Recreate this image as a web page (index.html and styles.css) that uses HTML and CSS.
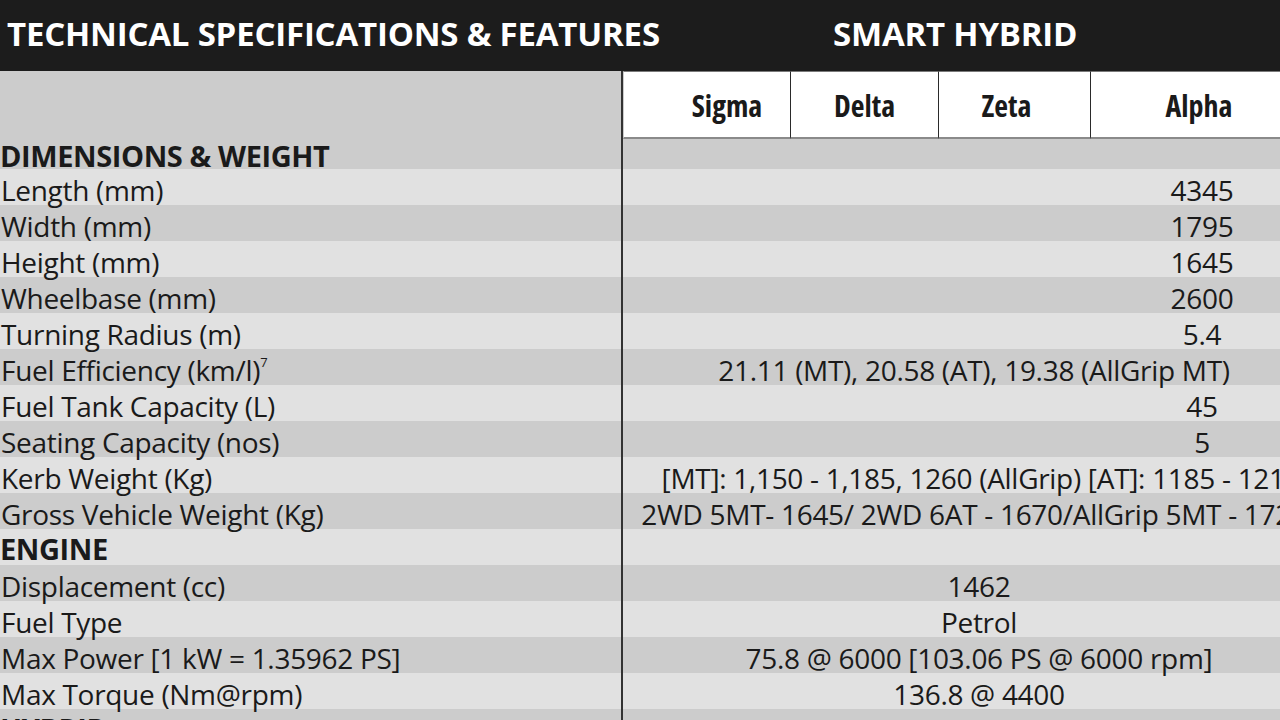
FILE: index.html
```html
<!DOCTYPE html>
<html>
<head>
<meta charset="utf-8">
<title>Technical Specifications &amp; Features</title>
<link rel="stylesheet" href="styles.css">
</head>
<body>
<div class="page">
  <header class="topbar">
    <h1 class="title-main">TECHNICAL SPECIFICATIONS &amp; FEATURES</h1>
    <h2 class="title-side">SMART HYBRID</h2>
  </header>

  <div class="row head-row">
    <div class="label"></div>
    <div class="vals variants">
      <div class="variant v-sigma">Sigma</div>
      <div class="variant v-delta">Delta</div>
      <div class="variant v-zeta">Zeta</div>
      <div class="variant v-alpha">Alpha</div>
    </div>
  </div>

  <div class="row dark section first">
    <div class="label">DIMENSIONS &amp; WEIGHT</div>
    <div class="vals"></div>
  </div>
  <div class="row light">
    <div class="label">Length (mm)</div>
    <div class="vals alpha">4345</div>
  </div>
  <div class="row dark">
    <div class="label">Width (mm)</div>
    <div class="vals alpha">1795</div>
  </div>
  <div class="row light">
    <div class="label">Height (mm)</div>
    <div class="vals alpha">1645</div>
  </div>
  <div class="row dark">
    <div class="label">Wheelbase (mm)</div>
    <div class="vals alpha">2600</div>
  </div>
  <div class="row light">
    <div class="label">Turning Radius (m)</div>
    <div class="vals alpha">5.4</div>
  </div>
  <div class="row dark">
    <div class="label">Fuel Efficiency (km/l)<sup>7</sup></div>
    <div class="vals span">21.11 (MT), 20.58 (AT), 19.38 (AllGrip MT)</div>
  </div>
  <div class="row light">
    <div class="label">Fuel Tank Capacity (L)</div>
    <div class="vals alpha">45</div>
  </div>
  <div class="row dark">
    <div class="label">Seating Capacity (nos)</div>
    <div class="vals alpha">5</div>
  </div>
  <div class="row light">
    <div class="label">Kerb Weight (Kg)</div>
    <div class="vals span kerb">[MT]: 1,150 - 1,185, 1260 (AllGrip) [AT]: 1185 - 1210</div>
  </div>
  <div class="row dark">
    <div class="label">Gross Vehicle Weight (Kg)</div>
    <div class="vals span">2WD 5MT- 1645/ 2WD 6AT - 1670/AllGrip 5MT - 1720</div>
  </div>
  <div class="row light section">
    <div class="label">ENGINE</div>
    <div class="vals"></div>
  </div>
  <div class="row dark">
    <div class="label">Displacement (cc)</div>
    <div class="vals span engine">1462</div>
  </div>
  <div class="row light">
    <div class="label">Fuel Type</div>
    <div class="vals span engine">Petrol</div>
  </div>
  <div class="row dark">
    <div class="label">Max Power [1 kW = 1.35962 PS]</div>
    <div class="vals span engine">75.8 @ 6000 [103.06 PS @ 6000 rpm]</div>
  </div>
  <div class="row light">
    <div class="label">Max Torque (Nm@rpm)</div>
    <div class="vals span engine">136.8 @ 4400</div>
  </div>
  <div class="row dark section">
    <div class="label">HYBRID</div>
    <div class="vals"></div>
  </div>
</div>
</body>
</html>
```
FILE: styles.css
```css
html, body {
  margin: 0;
  padding: 0;
  overflow: hidden;
  background: #cccccc;
}
body {
  font-family: "Open Sans", "DejaVu Sans", sans-serif;
  color: #1a1a1a;
}
.page {
  width: 1327px;
}
.topbar {
  height: 71px;
  background: #1c1c1c;
  display: flex;
  align-items: flex-start;
  box-sizing: border-box;
  padding-top: 17px;
}
.title-main,
.title-side {
  margin: 0;
  color: #ffffff;
  font-weight: 700;
  font-size: 33px;
  letter-spacing: -0.2px;
  white-space: nowrap;
  line-height: 1;
}
.title-main {
  width: 616px;
  padding-left: 7px;
}
.title-side {
  flex: 1;
  padding-left: 210px;
}
.row {
  display: flex;
  height: 36px;
  font-size: 28px;
  letter-spacing: -0.3px;
  line-height: 36px;
  white-space: nowrap;
}
.row.first {
  height: 30px;
  line-height: 30px;
}
.light { background: #e1e1e1; }
.dark { background: #cccccc; }
.label {
  width: 621px;
  flex: 0 0 621px;
  padding-left: 1px;
  box-sizing: border-box;
  padding-top: 3px;
}
.section .label {
  font-weight: 700;
  font-size: 29px;
  letter-spacing: -0.4px;
  padding-left: 0;
  padding-top: 2px;
}
.vals {
  flex: 0 0 704px;
  border-left: 2px solid #333333;
  box-sizing: border-box;
  text-align: center;
  padding-top: 3px;
}
.vals.alpha {
  padding-left: 466px;
  padding-right: 10px;
}
.vals.engine {
  padding-left: 10px;
}
.vals.kerb {
  padding-left: 14px;
}
sup {
  font-size: 13px;
  line-height: 0;
  vertical-align: 14px;
}
.head-row {
  height: 68px;
  background: #cccccc;
}
.variants {
  display: flex;
  padding-top: 0;
}
.variant {
  background: #ffffff;
  border-top: 1px solid #7a7a7a;
  border-bottom: 2px solid #8a8a8a;
  border-left: 1px solid #2a2a2a;
  box-sizing: border-box;
  height: 68px;
  font-weight: 700;
  font-size: 30px;
  font-stretch: 84%;
  letter-spacing: 0;
  line-height: 68px;
  text-align: center;
}
.v-sigma {
  width: 167px;
  border-left: 1px solid #cccccc;
  padding-left: 40px;
}
.v-delta { width: 148px; }
.v-zeta { width: 152px; padding-right: 16px; }
.v-alpha { width: 235px; padding-right: 18px; }
```
